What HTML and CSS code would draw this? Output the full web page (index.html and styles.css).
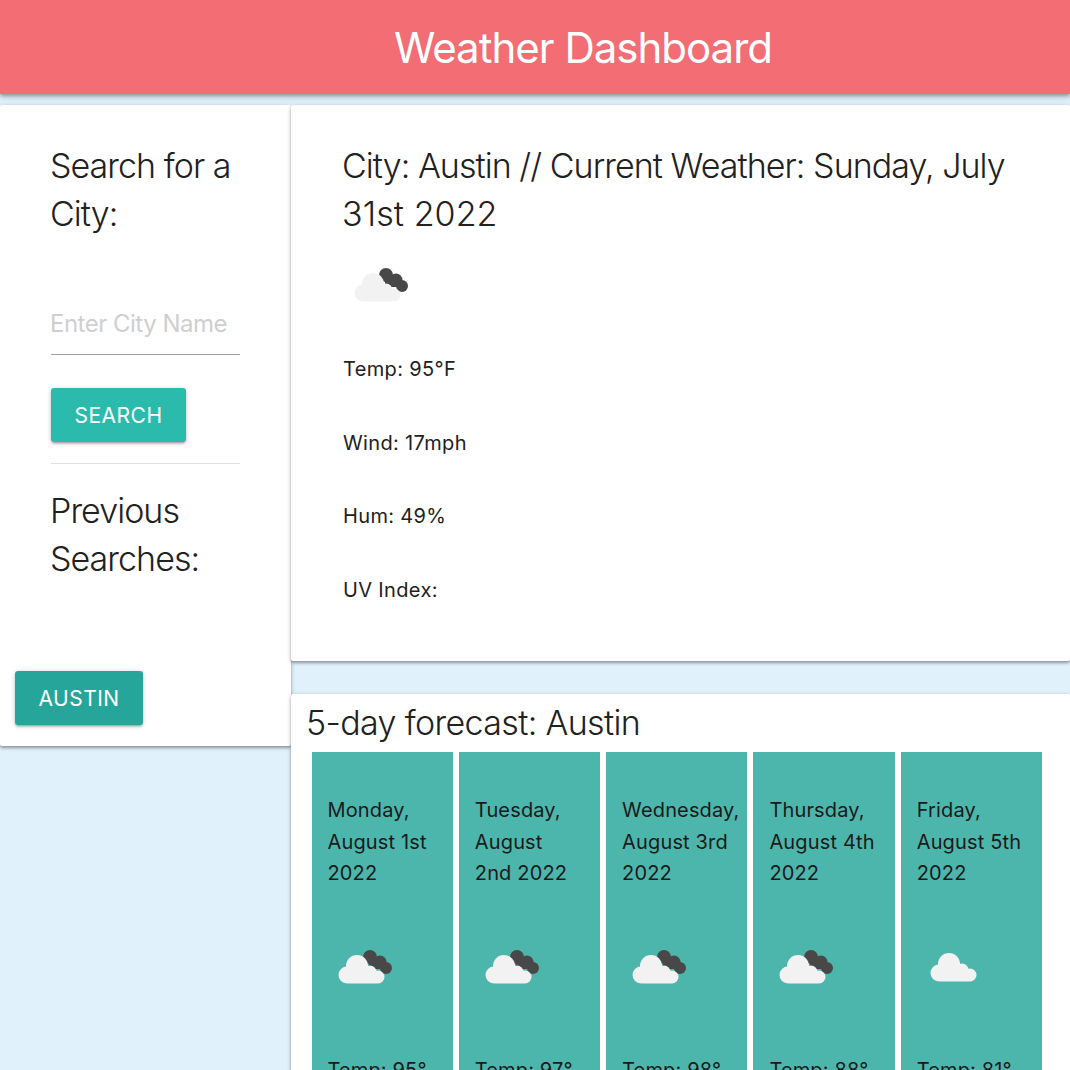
FILE: index.html
```html
<!DOCTYPE html>
<html lang="en">
<head>
  <meta charset="UTF-8">
  <title>Weather Dashboard</title>
  <link rel="stylesheet" href="styles.css">
</head>
<body>
  <svg class="defs" width="0" height="0">
    <defs>
      <g id="cloud-front">
        <circle cx="14" cy="30" r="8.5"/>
        <circle cx="24" cy="21" r="11"/>
        <circle cx="37" cy="27" r="6.5"/>
        <circle cx="45" cy="32" r="6.5"/>
        <rect x="14" y="26" width="31" height="12.5" rx="2"/>
      </g>
      <g id="cloud-back">
        <circle cx="37" cy="12" r="7"/>
        <circle cx="47" cy="17" r="6.5"/>
        <circle cx="53" cy="23" r="6"/>
        <rect x="36" y="12" width="14" height="12"/>
      </g>
    </defs>
  </svg>

  <header class="title-bar">
    <h1>Weather Dashboard</h1>
  </header>

  <main class="layout">
    <aside class="card search-card">
      <div class="search-inner">
        <h4>Search for a City:</h4>
        <div class="city-input">Enter City Name</div>
        <button class="btn btn-search">SEARCH</button>
        <hr>
        <h4>Previous Searches:</h4>
      </div>
      <button class="btn btn-history">AUSTIN</button>
    </aside>

    <section class="right-col">
      <div class="card current">
        <h4>City: Austin // Current Weather: Sunday, July <span class="date-end">31st 2022</span></h4>
        <svg class="icon" viewBox="0 0 66 50">
          <use href="#cloud-back" class="back"/>
          <use href="#cloud-front" class="front"/>
        </svg>
        <p>Temp: 95°F</p>
        <p>Wind: 17mph</p>
        <p>Hum: 49%</p>
        <p>UV Index:</p>
      </div>

      <div class="card forecast">
        <h5>5-day forecast: Austin</h5>
        <div class="days">
          <div class="day">
            <p>Monday,<br>August 1st<br>2022</p>
            <svg class="icon" viewBox="0 0 66 50"><use href="#cloud-back" class="back"/><use href="#cloud-front" class="front"/></svg>
            <p>Temp: 95°</p>
          </div>
          <div class="day">
            <p>Tuesday,<br>August<br>2nd 2022</p>
            <svg class="icon" viewBox="0 0 66 50"><use href="#cloud-back" class="back"/><use href="#cloud-front" class="front"/></svg>
            <p>Temp: 97°</p>
          </div>
          <div class="day">
            <p>Wednesday,<br>August 3rd<br>2022</p>
            <svg class="icon" viewBox="0 0 66 50"><use href="#cloud-back" class="back"/><use href="#cloud-front" class="front"/></svg>
            <p>Temp: 98°</p>
          </div>
          <div class="day">
            <p>Thursday,<br>August 4th<br>2022</p>
            <svg class="icon" viewBox="0 0 66 50"><use href="#cloud-back" class="back"/><use href="#cloud-front" class="front"/></svg>
            <p>Temp: 88°</p>
          </div>
          <div class="day">
            <p>Friday,<br>August 5th<br>2022</p>
            <svg class="icon icon-solo" viewBox="0 0 66 50"><use href="#cloud-front" class="front"/></svg>
            <p>Temp: 81°</p>
          </div>
        </div>
      </div>
    </section>
  </main>
</body>
</html>
```

FILE: styles.css
```css
html, body {
  margin: 0;
  padding: 0;
  height: 1070px;
  overflow: hidden;
}

body {
  background-color: #e0f1fc;
  color: #212121;
  font-family: Inter, Roboto, "Liberation Sans", sans-serif;
}

.defs {
  position: absolute;
}

.title-bar {
  position: relative;
  height: 94px;
  background-color: #f26d74;
  box-shadow: 0 2px 4px rgba(0, 0, 0, 0.35), 0 4px 8px rgba(0, 0, 0, 0.08);
  padding-left: 96px;
  display: flex;
  align-items: center;
  justify-content: center;
}

.title-bar h1 {
  margin: 0;
  color: #fff;
  font-size: 42px;
  font-weight: 400;
  letter-spacing: -1px;
}

.layout {
  display: flex;
  align-items: flex-start;
  margin-top: 11px;
}

.card {
  background-color: #fff;
  border-radius: 2px;
  box-shadow: 0 2px 3px rgba(0, 0, 0, 0.3), 0 1px 5px rgba(0, 0, 0, 0.15);
}

h4 {
  margin: 0 0 0 -1px;
  font-size: 34px;
  font-weight: 300;
  line-height: 48px;
  letter-spacing: -0.95px;
}

.date-end {
  letter-spacing: 0.08px;
}

.search-card {
  width: 291px;
  height: 641px;
  flex-shrink: 0;
  box-sizing: border-box;
}

.search-inner {
  padding: 37px 51px 0;
}

.city-input {
  margin-top: 70px;
  height: 47px;
  box-sizing: border-box;
  border-bottom: 1px solid #9e9e9e;
  color: #cfcfcf;
  font-size: 24px;
  font-weight: 400;
  line-height: 32px;
  letter-spacing: -0.5px;
  text-indent: -1px;
}

.btn {
  display: block;
  border: 0;
  border-radius: 3px;
  height: 54px;
  padding: 0 23.5px;
  color: #fff;
  font-family: inherit;
  font-size: 21px;
  letter-spacing: 0.5px;
  box-shadow: 0 2px 2px rgba(0, 0, 0, 0.14), 0 3px 1px -2px rgba(0, 0, 0, 0.12), 0 1px 5px rgba(0, 0, 0, 0.2);
}

.btn-search {
  margin-top: 33px;
  background-color: #2bbbad;
}

.btn-history {
  margin: 88px 0 0 15px;
  background-color: #26a69a;
}

hr {
  margin: 21px 0 0;
  border: 0;
  border-top: 1px solid #e0e0e0;
}

.search-inner hr + h4 {
  margin-top: 23px;
}

.right-col {
  flex: 1;
}

.current {
  height: 556px;
  box-sizing: border-box;
  padding: 37px 52px 0;
}

.current p {
  margin: 0 0 49px;
  font-size: 20px;
  line-height: 24.5px;
  letter-spacing: 0.35px;
}

.icon {
  display: block;
  width: 66px;
  height: 50px;
}

.icon .back {
  fill: #484848;
}

.icon .front {
  fill: #f2f2f2;
}

.current .icon {
  margin: 25px 0 44px 6px;
}

.forecast {
  margin-top: 33px;
  height: 500px;
  padding: 8px 16px 0;
}

h5 {
  margin: 0 0 0 -1px;
  font-size: 34px;
  font-weight: 300;
  line-height: 42px;
  letter-spacing: -0.65px;
}

.days {
  display: flex;
  gap: 6px;
  margin: 8px 0 0 4.5px;
  width: 730.5px;
}

.day {
  flex: 1;
  height: 400px;
  background-color: #4db6ac;
  padding: 43px 0 0 16px;
  box-sizing: border-box;
  color: #1a1a1a;
}

.day p {
  margin: 0;
  font-size: 20px;
  line-height: 31.5px;
  letter-spacing: 0.15px;
}

.day .icon {
  margin: 55px 0 60px 5px;
}

.day .icon-solo {
  margin: 53px 0 62px 8px;
}
```
